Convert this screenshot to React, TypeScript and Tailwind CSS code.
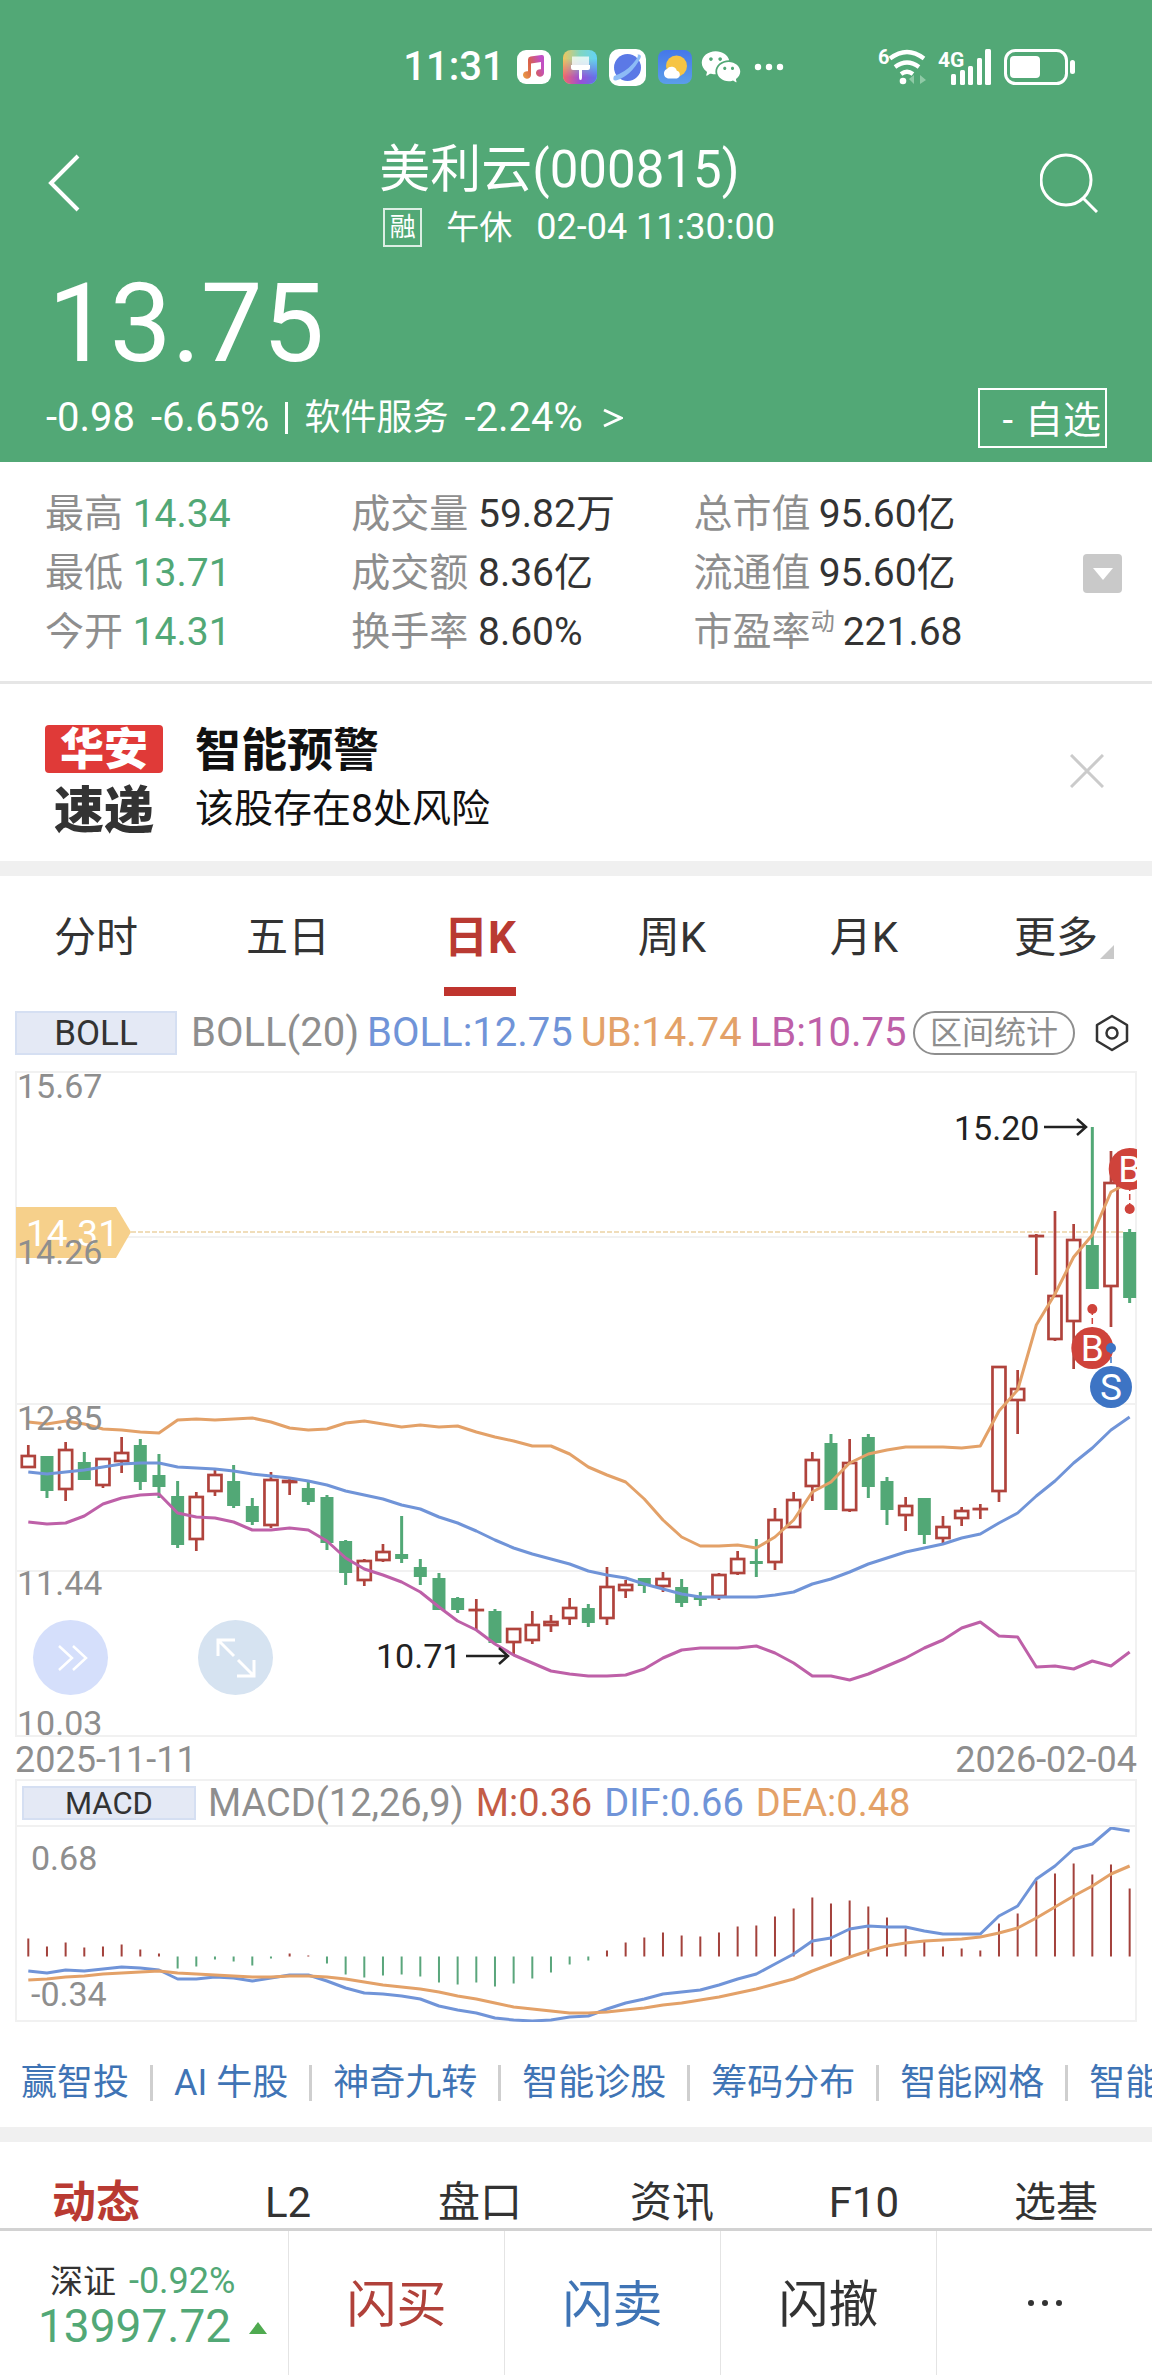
import { RiWechatFill } from 'react-icons/ri';

type Candle = [kind: 'up' | 'down', high: number, top: number, bottom: number, low: number];

// plot units, measured from the top of the pane
const candles: Candle[] = [
  ['up', 374, 384, 397, 397], ['down', 385, 385, 420, 427], ['up', 371, 378, 419, 430],
  ['down', 381, 391, 409, 409], ['up', 387, 387, 415, 417], ['up', 366, 381, 391, 402],
  ['down', 368, 374, 411, 419], ['down', 383, 404, 416, 427], ['down', 410, 425, 474, 477],
  ['up', 421, 425, 469, 480], ['up', 399, 403, 421, 425], ['down', 394, 410, 435, 437],
  ['down', 427, 435, 451, 454], ['up', 401, 408, 455, 457], ['up', 406, 409, 412, 424],
  ['down', 410, 417, 431, 434], ['down', 424, 426, 472, 479], ['down', 469, 470, 502, 514],
  ['up', 488, 489, 510, 515], ['up', 473, 480, 490, 491], ['down', 445, 483, 488, 492],
  ['down', 488, 496, 506, 514], ['down', 502, 507, 539, 539], ['down', 526, 527, 539, 542],
  ['up', 528, 538, 538, 559], ['down', 538, 540, 572, 572], ['up', 557, 557, 572, 584],
  ['up', 540, 553, 570, 573], ['up', 544, 550, 555, 561], ['up', 527, 536, 548, 554],
  ['down', 533, 537, 552, 556], ['up', 496, 515, 548, 554], ['up', 509, 513, 520, 527],
  ['down', 507, 507, 515, 522], ['up', 501, 507, 516, 521], ['down', 508, 516, 532, 536],
  ['down', 521, 526, 529, 535], ['up', 502, 503, 526, 529], ['up', 480, 487, 503, 504],
  ['down', 468, 490, 493, 506], ['up', 437, 448, 492, 499], ['up', 421, 428, 457, 457],
  ['up', 381, 388, 416, 430], ['down', 363, 372, 439, 439], ['up', 368, 391, 440, 441],
  ['down', 363, 366, 416, 427], ['down', 406, 410, 439, 454], ['up', 426, 434, 445, 460],
  ['down', 427, 427, 464, 473], ['up', 445, 455, 468, 472], ['up', 436, 439, 448, 455],
  ['up', 433, 437, 439, 448], ['up', 295, 295, 421, 431], ['up', 299, 317, 330, 363],
  ['up', 163, 164, 164, 204], ['up', 140, 224, 269, 270], ['up', 153, 168, 251, 298],
  ['down', 56, 174, 218, 218], ['up', 80, 111, 216, 256], ['down', 158, 161, 227, 232],
];

const upperBand = [
  351, 353, 350, 353, 358, 359, 361, 362, 349, 348, 349, 348, 347, 351, 357, 359, 358, 352, 350, 353,
  356, 354, 356, 355, 361, 366, 370, 375, 375, 383, 396, 404, 411, 428, 449, 466, 475, 475, 474, 477,
  466, 449, 421, 411, 392, 383, 379, 376, 376, 376, 377, 375, 340, 319, 254, 223, 186, 164, 121, 111,
];
const middleBand = [
  401, 403, 401, 399, 396, 393, 392, 392, 396, 397, 398, 400, 403, 405, 407, 410, 414, 420, 424, 428,
  434, 438, 446, 452, 460, 469, 477, 483, 488, 493, 500, 504, 507, 513, 518, 523, 526, 526, 526, 526,
  524, 521, 513, 508, 501, 493, 487, 481, 477, 473, 467, 463, 452, 442, 425, 410, 392, 377, 359, 346,
];
const lowerBand = [
  451, 453, 452, 445, 433, 427, 424, 423, 442, 446, 447, 451, 459, 459, 457, 459, 470, 487, 498, 504,
  511, 521, 536, 550, 559, 573, 584, 592, 600, 603, 605, 605, 604, 598, 587, 579, 577, 577, 577, 575,
  582, 592, 605, 605, 609, 603, 595, 587, 577, 569, 557, 551, 565, 566, 596, 595, 598, 590, 595, 581,
];
const macdBars = [
  18, 10, 14, 9, 10, 12, 7, 3, -12, -10, -3, -5, -9, -2, 3, 1, -7, -18, -21, -19,
  -18, -20, -26, -28, -26, -30, -27, -22, -16, -8, -4, 6, 14, 19, 24, 21, 20, 24, 30, 31,
  40, 48, 59, 53, 56, 50, 39, 28, 15, 10, 8, 6, 33, 43, 76, 83, 93, 82, 92, 68,
];
const dif = [
  144, 146, 143, 144, 142, 140, 141, 143, 152, 152, 150, 151, 154, 151, 148, 148, 154, 161, 166, 167,
  169, 172, 179, 183, 186, 191, 193, 194, 193, 190, 189, 182, 176, 172, 167, 165, 163, 158, 152, 147,
  137, 127, 114, 111, 102, 99, 100, 100, 104, 107, 107, 107, 89, 79, 52, 39, 22, 17, 1, 4,
];
const dea = [
  153, 152, 150, 149, 147, 146, 145, 144, 146, 147, 148, 149, 150, 150, 149, 149, 150, 152, 155, 158,
  160, 162, 165, 169, 172, 176, 180, 182, 184, 186, 186, 185, 183, 181, 178, 176, 173, 170, 166, 162,
  157, 152, 144, 137, 130, 124, 119, 116, 114, 113, 112, 110, 106, 101, 91, 80, 69, 59, 47, 39,
];

const xAt = (i: number) => 13.3 + i * 18.667;
const toPoints = (values: number[]) => values.map((y, i) => `${xAt(i)},${y}`).join(' ');

const RED = '#b0433c';
const GREEN = '#52a876';

const stats = [
  ['最高', '14.34', '成交量', '59.82万', '总市值', '95.60亿'],
  ['最低', '13.71', '成交额', '8.36亿', '流通值', '95.60亿'],
  ['今开', '14.31', '换手率', '8.60%', '市盈率', '221.68'],
];
const periods = ['分时', '五日', '日K', '周K', '月K', '更多'];
const tools = ['赢智投', 'AI 牛股', '神奇九转', '智能诊股', '筹码分布', '智能网格', '智能条件'];
const sections = ['动态', 'L2', '盘口', '资讯', 'F10', '选基'];

const MusicIcon = () => (
  <svg viewBox="0 0 34 34" className="size-[34px]">
    <defs>
      <linearGradient id="note" x1="0" y1="1" x2="1" y2="0.6">
        <stop offset="0" stopColor="#eba044" />
        <stop offset="0.5" stopColor="#d9604b" />
        <stop offset="1" stopColor="#c14fc4" />
      </linearGradient>
    </defs>
    <rect width="34" height="34" rx="9" fill="#fff" />
    <path
      d="M11 9.500q0-2.500 2.500-3l11-1.500q2.500-.3 2.500 2v16a4 3.800 0 1 1-3-3.700V12l-10 1.500V25a4 3.800 0 1 1-3-3.700Z"
      fill="url(#note)"
    />
  </svg>
);

const ThemeIcon = () => (
  <svg viewBox="0 0 34 34" className="size-[34px]">
    <defs>
      <linearGradient id="themeTop" x1="0" y1="0" x2="1" y2="0">
        <stop offset="0" stopColor="#f2c65c" />
        <stop offset="0.5" stopColor="#7fd6c0" />
        <stop offset="1" stopColor="#63d3f6" />
      </linearGradient>
      <linearGradient id="themeBottom" x1="0" y1="0" x2="1" y2="0">
        <stop offset="0" stopColor="#f4656b" />
        <stop offset="0.5" stopColor="#9a4fd6" />
        <stop offset="1" stopColor="#5f74ea" />
      </linearGradient>
      <linearGradient id="themeFade" x1="0" y1="0" x2="0" y2="1">
        <stop offset="0.25" stopColor="#fff" stopOpacity="0" />
        <stop offset="0.8" stopColor="#fff" />
      </linearGradient>
      <mask id="themeMask">
        <rect width="34" height="34" fill="url(#themeFade)" />
      </mask>
    </defs>
    <rect width="34" height="34" rx="8" fill="url(#themeTop)" />
    <rect width="34" height="34" rx="8" fill="url(#themeBottom)" mask="url(#themeMask)" />
    <path d="M9 6.500h17V15H9z" fill="#fff" opacity="0.75" />
    <path d="M8 15h19v3q0 2-2 2h-6v7.500q0 2.500-1.500 2.500t-1.500-2.500V20h-6q-2 0-2-2z" fill="#fff" />
  </svg>
);

const PlanetIcon = () => (
  <svg viewBox="0 0 37 37" className="size-[37px]">
    <rect width="37" height="37" rx="10" fill="#fff" />
    <circle cx="18.500" cy="18.500" r="13.500" fill="#5b79e6" />
    <path d="M5 27q-2 5 2 4.500Q22 27 31.500 9q1.500-4-3-3.500 2 1.500-5 9.500T5 27Z" fill="#8dbcf6" />
  </svg>
);

const WeatherIcon = () => (
  <svg viewBox="0 0 34 34" className="size-[34px]">
    <defs>
      <linearGradient id="sky" x1="0" y1="0" x2="0" y2="1">
        <stop offset="0" stopColor="#4577ea" />
        <stop offset="1" stopColor="#5b9eea" />
      </linearGradient>
    </defs>
    <rect width="34" height="34" rx="8" fill="url(#sky)" />
    <circle cx="18.500" cy="16" r="10.500" fill="#f6c445" />
    <path d="M10 28.500a5 5 0 0 1-1-9.500 5.500 5.500 0 0 1 9.800 1.800A4 4 0 0 1 19 28.500Z" fill="#fff" />
  </svg>
);

const WifiIcon = () => (
  <svg viewBox="0 0 48 36" className="h-9 w-12 overflow-visible" fill="none" stroke="#fff" strokeWidth="4.200">
    <text x="0" y="15" fontSize="20" fontWeight="700" fill="#fff" stroke="none">6</text>
    <path d="M12 9.500q17-13 34 0M17 18q12-9 24 0M23 25q6-4.500 12 0" />
    <circle cx="25" cy="32" r="3.300" fill="#fff" stroke="none" />
    <path d="M36 26v9l-5-5zM42 35v-9l6 5z" fill="#8fcaa6" stroke="none" />
  </svg>
);

const SignalIcon = () => (
  <svg viewBox="0 0 54 36" className="h-9 w-[54px] overflow-visible" fill="#fff">
    <text x="0" y="18" fontSize="21" fontWeight="700">4G</text>
    <rect x="13" y="25" width="5" height="11" rx="1.500" />
    <rect x="22" y="21" width="5" height="15" rx="1.500" />
    <rect x="30" y="17" width="5" height="19" rx="1.500" />
    <rect x="39" y="9" width="5" height="27" rx="1.500" />
    <rect x="47" y="0" width="6" height="36" rx="1.500" />
  </svg>
);

const BatteryIcon = () => (
  <svg viewBox="0 0 72 36" className="h-9 w-[72px]">
    <rect x="1.500" y="1.500" width="61" height="33" rx="10" fill="none" stroke="#fff" strokeWidth="3" />
    <rect x="6" y="7" width="30" height="22" rx="4" fill="#fff" />
    <rect x="66" y="11" width="5" height="14" rx="2.500" fill="#fff" />
  </svg>
);

const Header = () => (
  <header className="bg-[#52a876] text-white">
    <div className="flex h-24 items-center pt-[38px] pr-[76px] pl-[35%]">
      <span className="text-[40px] font-medium leading-[56px]">11:31</span>
      <div className="ml-3 flex items-center gap-3">
        <MusicIcon />
        <ThemeIcon />
        <PlanetIcon />
        <WeatherIcon />
      </div>
      <RiWechatFill className="ml-2 size-[42px]" />
      <svg viewBox="0 0 30 8" className="ml-3 h-2 w-[30px]" fill="#fff">
        <circle cx="4" cy="4" r="3.200" />
        <circle cx="15" cy="4" r="3.200" />
        <circle cx="26" cy="4" r="3.200" />
      </svg>
      <div className="ml-auto flex items-center gap-3">
        <WifiIcon />
        <SignalIcon />
        <BatteryIcon />
      </div>
    </div>

    <div className="flex items-start pt-[45px] pr-[54px] pl-12">
      <button type="button" aria-label="返回" className="mt-[13px]">
        <svg viewBox="0 0 32 58" className="h-[58px] w-8" fill="none" stroke="#fff" strokeWidth="4">
          <path d="M30 2 3 29l27 27" />
        </svg>
      </button>
      <div className="ml-[28.5%]">
        <h1 className="text-[51px] leading-[58px]">美利云(000815)</h1>
        <p className="flex items-center gap-6 text-[36px] leading-[57px]">
          <span className="ml-1 flex size-[39px] items-center justify-center border-2 border-white/80 text-[26px]">融</span>
          <span className="text-[33px]">午休</span>
          <span>02-04 11:30:00</span>
        </p>
      </div>
      <button type="button" aria-label="搜索" className="mt-3 ml-auto">
        <svg viewBox="0 0 58 60" className="h-[60px] w-[58px]" fill="none" stroke="#fff" strokeWidth="3">
          <circle cx="26" cy="27" r="25" />
          <path d="m43 45 14 14" />
        </svg>
      </button>
    </div>

    <p className="pt-1 pl-[48px] text-[110px] leading-[128px]">13.75</p>

    <div className="flex items-center pr-[45px] pb-[14px] pl-[46px]">
      <a href="#sector" className="flex items-center text-[40px]">
        <span>-0.98</span>
        <span className="ml-4">-6.65%</span>
        <span className="mx-4 h-8 w-[3px] bg-white" />
        <span className="text-[36px]">软件服务</span>
        <span className="ml-4">-2.24%</span>
        <svg viewBox="0 0 20 20" className="ml-5 size-5" fill="none" stroke="#fff" strokeWidth="3">
          <path d="m1 2 17 8-17 8" />
        </svg>
      </a>
      <button type="button" className="ml-auto flex h-[60px] w-[129px] items-center justify-end gap-3 border-2 border-white pt-1 pr-1 text-[38px] leading-none whitespace-nowrap">
        <span>-</span>
        <span>自选</span>
      </button>
    </div>
  </header>
);

const Quote = () => (
  <section className="flex items-center border-b-[3px] border-[#e6e6e6] pt-[23px] pr-[30px] pb-[19px] pl-[45px] text-[39px] leading-[59px] text-[#333]">
    <div className="grid flex-1 grid-cols-[306fr_342fr_389fr]">
      {stats.map((row) => (
        <div key={row[0]} className="contents">
          <p>
            <span className="text-[#8e8e8e]">{row[0]}</span> <span className="text-[#52a876]">{row[1]}</span>
          </p>
          <p>
            <span className="text-[#8e8e8e]">{row[2]}</span> {row[3]}
          </p>
          <p className="flex">
            <span className="text-[#8e8e8e]">{row[4]}</span>
            {row[4] === '市盈率' && <sup className="top-0 text-[24px] leading-[38px] text-[#8e8e8e]">动</sup>}
            <span className="ml-2">{row[5]}</span>
          </p>
        </div>
      ))}
    </div>
    <button type="button" aria-label="展开" className="flex size-[39px] items-center justify-center rounded-sm bg-[#c9c9c9]">
      <svg viewBox="0 0 20 12" className="h-3 w-5" fill="#fff">
        <path d="M0 0h20L10 12z" />
      </svg>
    </button>
  </section>
);

const Notice = () => (
  <section className="flex items-start border-b-[15px] border-[#f0f0f0] pt-[37px] pr-12 pb-[22px] pl-[45px] text-[#111]">
    <div className="mt-1 w-[118px] text-center font-black">
      <p className="rounded bg-[#e03a38] pt-[3px] text-[44px] leading-[45px] text-white">华安</p>
      <p className="mt-3 text-[50px] leading-[52px] text-[#333]">速递</p>
    </div>
    <div className="ml-8 leading-[59px]">
      <h2 className="text-[46px] font-bold leading-[59px]">智能预警</h2>
      <p className="text-[39px]">该股存在8处风险</p>
    </div>
    <button type="button" aria-label="关闭" className="mt-[33px] ml-auto">
      <svg viewBox="0 0 34 34" className="size-[34px]" stroke="#cbcbcb" strokeWidth="3">
        <path d="m1 1 32 32M33 1 1 33" />
      </svg>
    </button>
  </section>
);

const Marker = ({ x, y, dot, label, color }: { x: number; y: number; dot: number; label: string; color: string }) => (
  <g>
    <path d={`M${x} ${dot}V${y}`} stroke={color} strokeWidth="1.500" strokeDasharray="6 3" />
    <circle cx={x} cy={y} r="21" fill={color} />
    <text x={x} y={y + 13} fontSize="37" textAnchor="middle" fill="#fff">{label}</text>
    <circle cx={x} cy={dot} r="5" fill={color} />
  </g>
);

const PriceChart = () => (
  <div className="relative">
    <svg viewBox="0 0 1122 666" className="block w-full">
      <g stroke="#f1f1f1" strokeWidth="2" fill="none">
        <rect x="1" y="1" width="1120" height="664" />
        <path d="M0 166H1122M0 333H1122M0 500H1122" />
      </g>
      <path d="M116 161H1108" stroke="#ecd2a4" strokeWidth="1.500" strokeDasharray="5 2" />
      <path d="M1 136H101L116 161 101 187H1Z" fill="#f6d08b" />
      <text x="11" y="175" fontSize="37" fill="#fff">14.31</text>

      {candles.map(([kind, high, top, bottom, low], i) => {
        const x = xAt(i);
        if (kind === 'down') {
          return (
            <g key={i} fill={GREEN}>
              <rect x={x - 1.5} y={high} width="3" height={low - high} />
              <rect x={x - 6.5} y={top} width="13" height={bottom - top} />
            </g>
          );
        }
        return (
          <g key={i} stroke={RED} fill="none" strokeWidth="2.700">
            <path d={`M${x} ${high}V${top}M${x} ${bottom}V${low}`} />
            <rect x={x - 6.5} y={top + 1} width="13" height={Math.max(bottom - top - 2, 0.1)} />
          </g>
        );
      })}

      <g fill="none" strokeWidth="3" strokeLinejoin="round">
        <polyline points={toPoints(upperBand)} stroke="#e3a168" />
        <polyline points={toPoints(middleBand)} stroke="#7094d8" />
        <polyline points={toPoints(lowerBand)} stroke="#be60a8" />
      </g>

      <g fontSize="34" fill="#8e8e8e">
        <text x="2" y="27">15.67</text>
        <text x="2" y="193">14.26</text>
        <text x="2" y="359">12.85</text>
        <text x="2" y="524">11.44</text>
        <text x="2" y="664">10.03</text>
      </g>
      <g fontSize="34" fill="#222">
        <text x="939" y="69">15.20</text>
        <text x="361" y="597">10.71</text>
      </g>
      <g stroke="#222" strokeWidth="2.500" fill="none">
        <path d="M1029 56h42m-9-8 9 8-9 8" />
        <path d="M451 585h42m-9-8 9 8-9 8" />
      </g>

      <Marker x={1114.7} y={98} dot={138} label="B" color="#cf433b" />
      <Marker x={1077.3} y={277} dot={238} label="B" color="#cf433b" />
      <Marker x={1096} y={316} dot={277} label="S" color="#3d74c4" />
    </svg>

    <button type="button" aria-label="快进" className="absolute bottom-[42px] left-[18px] flex size-[75px] items-center justify-center rounded-full bg-[#d5dffb]">
      <svg viewBox="0 0 30 26" className="ml-1 h-[26px] w-[30px]" fill="none" stroke="#fff" strokeWidth="2.500">
        <path d="m1 1 13 12L1 25M15 1l13 12-13 12" />
      </svg>
    </button>
    <button type="button" aria-label="全屏" className="absolute bottom-[42px] left-[183px] flex size-[75px] items-center justify-center rounded-full bg-[#d6e3f1]">
      <svg viewBox="0 0 40 40" className="size-10" fill="none" stroke="#fff" strokeWidth="3">
        <path d="M2 18V2h17M2 2l16 16M38 22v16H21M38 38 22 22" />
      </svg>
    </button>
  </div>
);

const MacdChart = () => (
  <svg viewBox="0 0 1122 195" className="block w-full">
    <path d="M1 0V194H1121V0" fill="none" stroke="#f1f1f1" strokeWidth="2" />
    {macdBars.map((v, i) => (
      <rect
        key={i}
        x={xAt(i) - 1}
        y={v > 0 ? 129.5 - v : 129.5}
        width="2"
        height={Math.abs(v)}
        fill={v > 0 ? '#a3423c' : '#5aa67c'}
      />
    ))}
    <g fill="none" strokeWidth="3" strokeLinejoin="round">
      <polyline points={toPoints(dif)} stroke="#7094d8" />
      <polyline points={toPoints(dea)} stroke="#e3a168" />
    </g>
    <g fontSize="34" fill="#8e8e8e">
      <text x="16" y="43">0.68</text>
      <text x="16" y="179">-0.34</text>
    </g>
  </svg>
);

const Charts = () => (
  <section className="pt-[15px]">
    <div className="flex h-11 items-center pr-[23px] pl-[15px] text-[40px] whitespace-nowrap">
      <button type="button" className="h-11 w-[162px] shrink-0 border-2 border-[#d5dff2] bg-[#e4e9f5] text-[35px] leading-none text-[#333]">
        BOLL
      </button>
      <p className="ml-[14px] flex gap-2">
        <span className="text-[#8e8e8e]">BOLL(20)</span>
        <span className="text-[#7094d8]">BOLL:12.75</span>
        <span className="text-[#e3a168]">UB:14.74</span>
        <span className="text-[#be60a8]">LB:10.75</span>
      </p>
      <button type="button" className="ml-auto h-11 w-[162px] shrink-0 rounded-full border-2 border-[#8e8e8e] text-[32px] leading-none text-[#8e8e8e]">
        区间统计
      </button>
      <button type="button" aria-label="设置" className="ml-5 shrink-0">
        <svg viewBox="0 0 34 38" className="h-[38px] w-[34px]" fill="none" stroke="#333" strokeWidth="2.500">
          <path d="m17 2 15 9v16l-15 9-15-9V11z" strokeLinejoin="round" />
          <circle cx="17" cy="19" r="5.500" />
        </svg>
      </button>
    </div>

    <div className="mx-[15px] mt-4">
      <PriceChart />
      <p className="flex h-[42px] items-center justify-between pt-1 text-[36px] leading-none text-[#8e8e8e]">
        <span>2025-11-11</span>
        <span>2026-02-04</span>
      </p>
      <div className="flex h-12 items-center border-2 border-[#f1f1f1] pl-[5px] text-[38px]">
        <button type="button" className="h-[34px] w-[174px] border-2 border-[#d5dff2] bg-[#e4e9f5] text-[31px] leading-none text-[#333]">
          MACD
        </button>
        <p className="ml-3 flex gap-3">
          <span className="text-[#8e8e8e]">MACD(12,26,9)</span>
          <span className="text-[#c45c46]">M:0.36</span>
          <span className="text-[#7094d8]">DIF:0.66</span>
          <span className="text-[#e3a168]">DEA:0.48</span>
        </p>
      </div>
      <MacdChart />
    </div>
  </section>
);

export default function App() {
  return (
    <div className="overflow-hidden bg-white [font-family:Roboto,'Noto_Sans_CJK_SC',sans-serif]">
      <Header />
      <Quote />
      <Notice />

      <nav className="grid grid-cols-6 text-[42px] leading-[50px] text-[#333]">
        {periods.map((p) => (
          <button key={p} type="button" className="flex flex-col items-center pt-[37px]">
            {p === '日K' ? (
              <>
                <span className="text-[44px] font-bold text-[#b93a32]">{p}</span>
                <span className="mt-6 h-[9px] w-[72px] bg-[#bf342e]" />
              </>
            ) : (
              <span className="relative">
                {p}
                {p === '更多' && (
                  <svg viewBox="0 0 14 14" className="absolute -right-4 bottom-1 size-[14px]" fill="#c9c9c9">
                    <path d="M14 0v14H0z" />
                  </svg>
                )}
              </span>
            )}
          </button>
        ))}
      </nav>

      <Charts />

      <nav className="flex items-center border-b-[15px] border-[#f0f0f0] pt-9 pb-[19px] pl-[21px] text-[36px] leading-[50px] whitespace-nowrap text-[#3f74b5]">
        {tools.map((t, i) => (
          <a key={t} href="#tool" className="flex shrink-0 items-center">
            {i > 0 && <span className="mx-[21px] h-9 w-[3px] bg-[#cfcfcf]" />}
            {t}
          </a>
        ))}
      </nav>

      <nav className="grid grid-cols-6 pt-9 text-[42px] leading-[50px] text-[#333]">
        {sections.map((s, i) => (
          <button key={s} type="button" className={i === 0 ? 'text-[44px] font-bold text-[#b93a32]' : ''}>
            {s}
          </button>
        ))}
      </nav>

      <footer className="grid grid-cols-[4fr_3fr_3fr_3fr_3fr] border-t-[3px] border-[#d2d2d2] text-[50px] text-[#333]">
        <div className="flex flex-col pt-[26px] pb-[29px] pl-[38px]">
          <p className="pl-3 text-[36px] leading-[48px]">
            <span className="text-[33px]">深证</span> <span className="ml-1 text-[#52a876]">-0.92%</span>
          </p>
          <p className="flex items-center text-[46px] leading-[40px] text-[#52a876]">
            13997.72
            <svg viewBox="0 0 18 12" className="mt-1 ml-[18px] h-3 w-[18px]" fill="#4faa50">
              <path d="M9 0l9 12H0z" />
            </svg>
          </p>
        </div>
        <button type="button" className="border-l border-[#e4e4e4] pt-1 text-[#b0413a]">闪买</button>
        <button type="button" className="border-l border-[#e4e4e4] pt-1 text-[#3f74b5]">闪卖</button>
        <button type="button" className="border-l border-[#e4e4e4] pt-1">闪撤</button>
        <button type="button" aria-label="更多操作" className="flex items-center justify-center border-l border-[#e4e4e4]">
          <svg viewBox="0 0 36 8" className="h-2 w-9" fill="#333">
            <circle cx="4" cy="4" r="3" />
            <circle cx="18" cy="4" r="3" />
            <circle cx="32" cy="4" r="3" />
          </svg>
        </button>
      </footer>
    </div>
  );
}
